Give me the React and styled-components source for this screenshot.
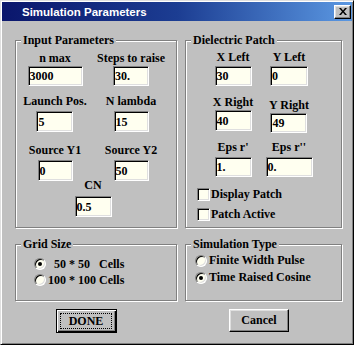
import React from "react";
import styled, { createGlobalStyle } from "styled-components";

const GlobalStyle = createGlobalStyle`
  html, body {
    margin: 0;
    padding: 0;
    background: #c0c0c0;
  }
  body {
    font-family: "Liberation Serif", "Times New Roman", serif;
  }
`;

const Window = styled.div`
  box-sizing: border-box;
  width: 354px;
  height: 345px;
  background: #c0c0c0;
  border: 1px solid;
  border-color: #dfdfdf #000 #000 #dfdfdf;
  box-shadow: inset 1px 1px 0 #fff, inset -1px -1px 0 #808080;
  padding: 1px;
  display: flex;
  flex-direction: column;
`;

const TitleBar = styled.div`
  height: 19px;
  display: flex;
  align-items: center;
  padding: 0 1px 0 20px;
  background: linear-gradient(to right, #0a166c 0%, #1c3d92 50%, #5b98e2 100%);
`;

const TitleText = styled.span`
  font-family: "Liberation Sans", Arial, sans-serif;
  font-weight: bold;
  font-size: 11.5px;
  color: #fff;
`;

const CloseButton = styled.div`
  box-sizing: border-box;
  margin-left: auto;
  width: 17px;
  height: 14px;
  background: #c0c0c0;
  border: 1px solid;
  border-color: #fff #000 #000 #fff;
  box-shadow: inset -1px -1px 0 #808080, inset 1px 1px 0 #dfdfdf;
  display: flex;
  align-items: center;
  justify-content: center;
`;

const Body = styled.div`
  padding: 19px 10px 0 13px;
`;

const Columns = styled.div`
  display: grid;
  grid-template-columns: 162px 157px;
  grid-template-rows: ${(p) => p.$rows || "auto"};
  column-gap: 8px;
  row-gap: 16px;
  margin-top: ${(p) => p.$mt || 0}px;
`;

const GroupBox = styled.div`
  position: relative;
  box-sizing: border-box;
  border: 1px solid #808080;
  box-shadow: inset 1px 1px 0 #fff, 1px 1px 0 #fff;
  padding: ${(p) => p.$pad};
`;

const Caption = styled.span`
  position: absolute;
  top: -8px;
  left: 5px;
  padding: 0 2px;
  background: #c0c0c0;
  font-weight: bold;
  font-size: 12px;
  line-height: 15px;
  white-space: nowrap;
`;

const Row = styled.div`
  display: grid;
  grid-template-columns: ${(p) => p.$cols};
  justify-items: center;
  align-items: start;
  padding-left: ${(p) => p.$pl || 0}px;
  margin-top: ${(p) => p.$mt || 0}px;
`;

const Field = styled.div`
  display: flex;
  flex-direction: column;
  align-items: center;
  gap: ${(p) => p.$gap || 0}px;
  margin-top: ${(p) => p.$mt || 0}px;
`;

const FieldLabel = styled.span`
  font-weight: bold;
  font-size: 12px;
  line-height: 16px;
  white-space: nowrap;
`;

const TextBox = styled.input`
  box-sizing: border-box;
  width: ${(p) => p.$w}px;
  height: ${(p) => p.$h || 20}px;
  margin: 0;
  padding: 1px 0 0 1px;
  border: 1px solid;
  border-color: #808080 #fff #fff #808080;
  box-shadow: inset 1px 1px 0 #000, inset -1px -1px 0 #dfdfdf;
  background: #fffff0;
  color: #000;
  font-family: "Liberation Serif", "Times New Roman", serif;
  font-weight: bold;
  font-size: 12px;
  outline: none;
`;

const CheckList = styled.div`
  display: flex;
  flex-direction: column;
  margin-top: 7px;
  padding-left: 11px;
`;

const CheckRow = styled.label`
  display: flex;
  align-items: center;
  gap: 1px;
  height: 20px;
  font-weight: bold;
  font-size: 12px;
`;

const CheckBox = styled.span`
  box-sizing: border-box;
  width: 13px;
  height: 13px;
  border: 1px solid;
  border-color: #808080 #fff #fff #808080;
  box-shadow: inset 1px 1px 0 #000, inset -1px -1px 0 #dfdfdf;
  background: #fffff0;
`;

const RadioList = styled.div`
  display: flex;
  flex-direction: column;
  padding-top: ${(p) => p.$top}px;
  padding-left: ${(p) => p.$left}px;
`;

const RadioRow = styled.label`
  display: flex;
  align-items: center;
  gap: 2px;
  height: ${(p) => p.$h}px;
  font-weight: bold;
  font-size: 12px;
  white-space: pre;
`;

const Radio = styled.span`
  position: relative;
  box-sizing: border-box;
  width: 12px;
  height: 12px;
  border-radius: 50%;
  border: 1px solid;
  border-color: #808080 #fff #fff #808080;
  box-shadow: inset 1px 1px 0 #000, inset -1px -1px 0 #dfdfdf;
  background: #fffff0;
  &::after {
    content: "";
    display: ${(p) => (p.$on ? "block" : "none")};
    position: absolute;
    left: 3px;
    top: 3px;
    width: 4px;
    height: 4px;
    border-radius: 50%;
    background: #000;
  }
`;

const PushButton = styled.button`
  box-sizing: border-box;
  justify-self: start;
  margin: 0 0 0 ${(p) => p.$ml}px;
  width: ${(p) => p.$w}px;
  height: ${(p) => p.$h}px;
  padding: 0;
  background: #c0c0c0;
  color: #000;
  font-family: "Liberation Serif", "Times New Roman", serif;
  font-weight: bold;
  font-size: 12px;
  border: 1px solid;
  border-color: #fff #000 #000 #fff;
  box-shadow: inset -1px -1px 0 #808080, inset 1px 1px 0 #dfdfdf;
  display: flex;
  align-items: center;
  justify-content: center;
`;

const DefaultButton = styled(PushButton)`
  border-color: #000;
  box-shadow: inset 1px 1px 0 #fff, inset -1px -1px 0 #000,
    inset -2px -2px 0 #808080;
  padding: 3px 4px 3px 3px;
`;

const FocusRing = styled.span`
  box-sizing: border-box;
  flex: 1;
  align-self: stretch;
  border: 1px dotted #000;
  display: flex;
  align-items: center;
  justify-content: center;
`;

function CloseGlyph() {
  return (
    <svg width="8" height="7" viewBox="0 0 8 7">
      <path d="M0 0h2l2 2.5L6 0h2L5 3.5 8 7H6L4 4.5 2 7H0l3-3.5z" fill="#000" />
    </svg>
  );
}

function Entry({ label, value, w, h, gap, mt }) {
  return (
    <Field $gap={gap} $mt={mt}>
      <FieldLabel>{label}</FieldLabel>
      <TextBox $w={w} $h={h} defaultValue={value} />
    </Field>
  );
}

export default function App() {
  return (
    <>
      <GlobalStyle />
      <Window>
        <TitleBar>
          <TitleText>Simulation Parameters</TitleText>
          <CloseButton>
            <CloseGlyph />
          </CloseButton>
        </TitleBar>
        <Body>
          <Columns $rows="188px 57px">
            <GroupBox $pad="9px 0 0 0">
              <Caption>Input Parameters</Caption>
              <Row $cols="76px 76px" $pl={1}>
                <Entry label="n max" value="3000" w={55} h={20} />
                <Entry label="Steps to raise" value="30." w={36} h={20} />
              </Row>
              <Row $cols="76px 76px" $pl={1} $mt={7}>
                <Entry label="Launch Pos." value="5" w={37} h={21} gap={2} />
                <Entry label="N lambda" value="15" w={35} h={21} gap={2} />
              </Row>
              <Row $cols="76px 76px" $pl={1} $mt={10}>
                <Entry label="Source Y1" value="0" w={35} h={21} gap={2} />
                <Entry label="Source Y2" value="50" w={35} h={21} gap={2} />
              </Row>
              <Row $cols="154px" $mt={-4}>
                <Entry label="CN" value="0.5" w={37} h={21} gap={3} />
              </Row>
            </GroupBox>

            <GroupBox $pad="8px 0 0 0">
              <Caption>Dielectric Patch</Caption>
              <Row $cols="56px 56px" $pl={19}>
                <Entry label="X Left" value="30" w={37} h={20} gap={1} />
                <Entry label="Y Left" value="0" w={38} h={20} gap={1} />
              </Row>
              <Row $cols="56px 56px" $pl={19} $mt={8}>
                <Entry label="X Right" value="40" w={37} h={21} />
                <Entry label="Y Right" value="49" w={37} h={20} mt={3} />
              </Row>
              <Row $cols="56px 56px" $pl={19} $mt={6}>
                <Entry label="Eps r'" value="1." w={37} h={20} gap={2} />
                <Entry label={"Eps r''"} value="0." w={47} h={20} gap={2} />
              </Row>
              <CheckList>
                <CheckRow>
                  <CheckBox />
                  Display Patch
                </CheckRow>
                <CheckRow>
                  <CheckBox />
                  Patch Active
                </CheckRow>
              </CheckList>
            </GroupBox>

            <GroupBox $pad="0">
              <Caption>Grid Size</Caption>
              <RadioList $top={11} $left={18}>
                <RadioRow $h={16}>
                  <Radio $on />
                  {"  50 * 50   Cells"}
                </RadioRow>
                <RadioRow $h={16}>
                  <Radio />
                  {"100 * 100 Cells"}
                </RadioRow>
              </RadioList>
            </GroupBox>

            <GroupBox $pad="0">
              <Caption>Simulation Type</Caption>
              <RadioList $top={7} $left={9}>
                <RadioRow $h={17}>
                  <Radio />
                  Finite Width Pulse
                </RadioRow>
                <RadioRow $h={17}>
                  <Radio $on />
                  Time Raised Cosine
                </RadioRow>
              </RadioList>
            </GroupBox>
          </Columns>

          <Columns $mt={8}>
            <DefaultButton $ml={41} $w={61} $h={24}>
              <FocusRing>DONE</FocusRing>
            </DefaultButton>
            <PushButton $ml={44} $w={60} $h={23}>
              Cancel
            </PushButton>
          </Columns>
        </Body>
      </Window>
    </>
  );
}
